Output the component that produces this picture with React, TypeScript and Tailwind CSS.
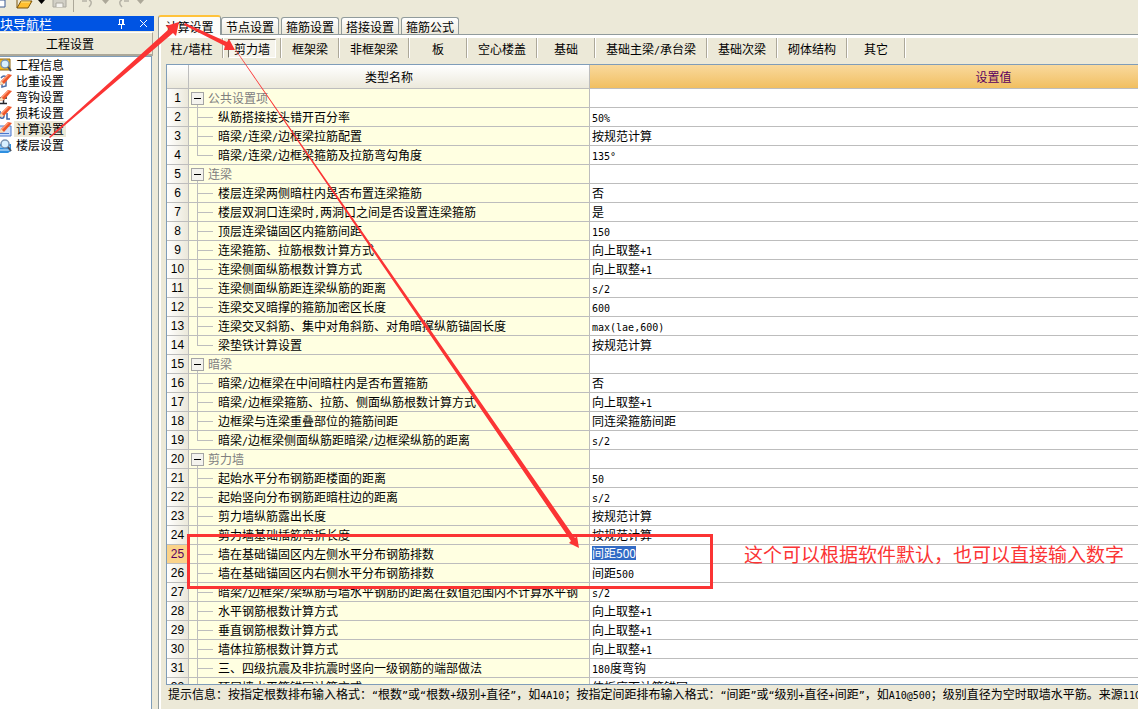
import { useState } from "react"
import type { ReactNode } from "react"

type Row = {
  name: string
  value?: string
  group?: boolean
  last?: boolean
}

const pageTabs = ["计算设置", "节点设置", "箍筋设置", "搭接设置", "箍筋公式"]

const memberTabs = [
  { label: "柱/墙柱", width: "w-[63px]" },
  { label: "剪力墙", width: "w-[58px]" },
  { label: "框架梁", width: "w-[58px]" },
  { label: "非框架梁", width: "w-[70px]" },
  { label: "板", width: "w-[58px]" },
  { label: "空心楼盖", width: "w-[70px]" },
  { label: "基础", width: "w-[58px]" },
  { label: "基础主梁/承台梁", width: "w-[112px]" },
  { label: "基础次梁", width: "w-[70px]" },
  { label: "砌体结构", width: "w-[70px]" },
  { label: "其它", width: "w-[58px]" },
]

const rows: Row[] = [
  { name: "公共设置项", group: true },
  { name: "纵筋搭接接头错开百分率", value: "50%" },
  { name: "暗梁/连梁/边框梁拉筋配置", value: "按规范计算" },
  { name: "暗梁/连梁/边框梁箍筋及拉筋弯勾角度", value: "135°", last: true },
  { name: "连梁", group: true },
  { name: "楼层连梁两侧暗柱内是否布置连梁箍筋", value: "否" },
  { name: "楼层双洞口连梁时,两洞口之间是否设置连梁箍筋", value: "是" },
  { name: "顶层连梁锚固区内箍筋间距", value: "150" },
  { name: "连梁箍筋、拉筋根数计算方式", value: "向上取整+1" },
  { name: "连梁侧面纵筋根数计算方式", value: "向上取整+1" },
  { name: "连梁侧面纵筋距连梁纵筋的距离", value: "s/2" },
  { name: "连梁交叉暗撑的箍筋加密区长度", value: "600" },
  { name: "连梁交叉斜筋、集中对角斜筋、对角暗撑纵筋锚固长度", value: "max(lae,600)" },
  { name: "梁垫铁计算设置", value: "按规范计算", last: true },
  { name: "暗梁", group: true },
  { name: "暗梁/边框梁在中间暗柱内是否布置箍筋", value: "否" },
  { name: "暗梁/边框梁箍筋、拉筋、侧面纵筋根数计算方式", value: "向上取整+1" },
  { name: "边框梁与连梁重叠部位的箍筋间距", value: "同连梁箍筋间距" },
  { name: "暗梁/边框梁侧面纵筋距暗梁/边框梁纵筋的距离", value: "s/2", last: true },
  { name: "剪力墙", group: true },
  { name: "起始水平分布钢筋距楼面的距离", value: "50" },
  { name: "起始竖向分布钢筋距暗柱边的距离", value: "s/2" },
  { name: "剪力墙纵筋露出长度", value: "按规范计算" },
  { name: "剪力墙基础插筋弯折长度", value: "按规范计算" },
  { name: "墙在基础锚固区内左侧水平分布钢筋排数", value: "间距500" },
  { name: "墙在基础锚固区内右侧水平分布钢筋排数", value: "间距500" },
  { name: "暗梁/边框梁/梁纵筋与墙水平钢筋的距离在数值范围内不计算水平钢", value: "s/2" },
  { name: "水平钢筋根数计算方式", value: "向上取整+1" },
  { name: "垂直钢筋根数计算方式", value: "向上取整+1" },
  { name: "墙体拉筋根数计算方式", value: "向上取整+1" },
  { name: "三、四级抗震及非抗震时竖向一级钢筋的端部做法", value: "180度弯钩" },
  { name: "顶层墙水平筋锚固计算方式", value: "伸板底面计算锚固" },
]

const hint =
  "提示信息：按指定根数排布输入格式：“根数”或“根数+级别+直径”，如4A10；按指定间距排布输入格式：“间距”或“级别+直径+间距”，如A10@500；级别直径为空时取墙水平筋。来源11G101"

// Latin runs are half the width of a Chinese character
function Mixed({ text }: { text: string }) {
  return (
    <>
      {text.split(/([\x20-\x7e“”°]+)/).map((part, i) =>
        i % 2 ? (
          <span key={i} className="font-['DejaVu_Sans_Mono',monospace] text-[10px] leading-none">{part}</span>
        ) : (
          part
        )
      )}
    </>
  )
}

const pencil = (
  <>
    <path d="M3 12l2-4 7-7 4 1-8 9z" fill="#ee5528" />
    <path d="M5 8l7-7 1 1-7 7z" fill="#ff9c78" />
    <path d="M3 12l2-4 3 3z" fill="#f8e0b8" />
  </>
)

const lens = (
  <>
    <circle cx="9" cy="7" r="4" fill="#d8f0ff" stroke="#7a93b0" strokeWidth="1.5" />
    <path d="M12 10l3 4" stroke="#46505f" strokeWidth="2" />
  </>
)

const navItems: { label: string; icon: ReactNode }[] = [
  {
    label: "工程信息",
    icon: (
      <>
        <path d="M2 2h12v11H2z" fill="#f5b921" stroke="#94660c" />
        {lens}
      </>
    ),
  },
  {
    label: "比重设置",
    icon: (
      <>
        <path d="M5 5c3-4 7-1 5 2v6l-4 1v-3" fill="none" stroke="#4c6ea6" strokeWidth="1.5" />
        {pencil}
      </>
    ),
  },
  {
    label: "弯钩设置",
    icon: (
      <>
        <path d="M4 14.500h7M7.500 14V8M4 9h7" fill="none" stroke="#26262c" strokeWidth="1.5" />
        {pencil}
      </>
    ),
  },
  {
    label: "损耗设置",
    icon: (
      <>
        <path d="M4 6v5c0 3 4 3 4 0V9M11 8v6h3" fill="none" stroke="#3a62a4" strokeWidth="1.5" />
        {pencil}
      </>
    ),
  },
  {
    label: "计算设置",
    icon: (
      <>
        <path d="M2 5h13v10H2z" fill="#cfe0fb" stroke="#4a78cc" />
        <path d="M4 12.500h9" stroke="#4a78cc" />
        {pencil}
      </>
    ),
  },
  {
    label: "楼层设置",
    icon: (
      <>
        <path d="M2 7h13v7l-3 2H2z" fill="#2f8fe0" />
        <path d="M2 10h12M2 13h12" stroke="#dff0ff" />
        {lens}
      </>
    ),
  },
]

function DropArrow({ color }: { color: string }) {
  return (
    <svg className="w-[7px] h-1" viewBox="0 0 7 4">
      <path d="M0 0h7L3.500 4z" fill={color} />
    </svg>
  )
}

function Toolbar() {
  return (
    <div className="flex h-[15px] shrink-0 items-start">
      <div className="flex h-3 items-start">
        <button aria-label="新建" className="w-[16px]">
          <svg className="h-2 w-[6px]" viewBox="0 0 6 8">
            <path d="M0 0h5v7H0" fill="#fff" stroke="#3a5a94" />
          </svg>
        </button>
        <button aria-label="打开" className="w-[22px]">
          <svg className="h-[9px] w-[17px]" viewBox="0 0 17 9">
            <path d="M1 0v8h11l4-7H5L1 8" fill="#ffbe2e" stroke="#7a550c" />
            <path d="M5 2h9" stroke="#ffe88c" />
          </svg>
        </button>
        <DropArrow color="#000" />
        <button aria-label="保存" className="ml-[7px] w-[16px]">
          <svg className="h-2 w-[15px]" viewBox="0 0 15 8">
            <path d="M1 0v7h13V0" fill="#d2d0c6" stroke="#aaa89e" />
            <path d="M4 7V3h7v4" fill="#f4f3ee" stroke="#aaa89e" />
          </svg>
        </button>
        <span className="ml-[5px] h-3 w-px bg-[#aca899]" />
        <button aria-label="撤销" className="ml-2 w-[20px]">
          <svg className="h-2 w-3" viewBox="0 0 12 8">
            <path d="M0 1h5M7 0c3 1 3 4 0 7" fill="none" stroke="#b5b2a6" strokeWidth="1.5" />
          </svg>
        </button>
        <DropArrow color="#aca899" />
        <button aria-label="恢复" className="ml-2 w-[20px]">
          <svg className="h-2 w-3" viewBox="0 0 12 8">
            <path d="M12 1H7M5 0C2 1 2 4 5 7" fill="none" stroke="#b5b2a6" strokeWidth="1.5" />
          </svg>
        </button>
        <DropArrow color="#aca899" />
      </div>
    </div>
  )
}

function NavPanel() {
  return (
    <aside className="mt-px flex w-[154px] shrink-0 flex-col">
      <div className="flex h-[15px] items-center bg-[#0054e3] pr-[6px] text-white">
        <span className="flex-1 text-[13px] leading-[15px]">块导航栏</span>
        <button aria-label="固定" className="mr-[13px]">
          <svg className="h-[11px] w-[9px]" viewBox="0 0 9 11">
            <path d="M2.500 1v5M6 1v5M2 1.500h5M1 6.500h7M4.500 7v4" fill="none" stroke="#fff" />
            <path d="M5 1h2v5H5z" fill="#fff" />
          </svg>
        </button>
        <button aria-label="关闭">
          <svg className="h-[9px] w-[9px]" viewBox="0 0 9 9">
            <path d="M1 1l7 7M8 1L1 8" stroke="#fff" />
          </svg>
        </button>
      </div>
      <button className="mt-px mr-px h-[24px] border-t border-r border-b-2 border-t-white border-r-[#aca899] border-b-[#aca899] pr-3 leading-[20px]">
        工程设置
      </button>
      <nav className="mr-[2px] flex-1 border-t border-r border-[#7f9db9] bg-white">
        {navItems.map((item) => (
          <a key={item.label} href="#" className="flex h-4 items-center">
            <svg className="mr-[2px] h-4 w-3" viewBox="4 0 12 16">
              {item.icon}
            </svg>
            <span className={item.label === "计算设置" ? "bg-[#ece9d8] px-[2px] leading-4" : "px-[2px] leading-4"}>
              {item.label}
            </span>
          </a>
        ))}
      </nav>
    </aside>
  )
}

function TreeCell({ row }: { row: Row }) {
  if (row.group) {
    return (
      <div className="flex h-[18px] overflow-hidden text-[#808080]">
        <span className="ml-[2px] mr-1 flex w-[13px] flex-col items-center">
          <button
            aria-label={"折叠" + row.name}
            className="mt-[3px] flex h-[13px] w-[13px] shrink-0 items-center justify-center border border-[#a5a5a5] bg-[#f4f3ee]"
          >
            <span className="h-px w-[7px] bg-black" />
          </button>
          <span className="w-px flex-1 bg-[#bdbdbd]" />
        </span>
        {row.name}
      </div>
    )
  }
  return (
    <div className="flex h-[18px] overflow-hidden">
      <span className="ml-2 mr-1 flex w-4 shrink-0 flex-col">
        <span className="h-[10px] border-b border-l border-[#bdbdbd]" />
        {!row.last && <span className="flex-1 border-l border-[#bdbdbd]" />}
      </span>
      <span className="whitespace-nowrap pl-px">
        <Mixed text={row.name} />
      </span>
    </div>
  )
}

function SettingsTable() {
  const [value, setValue] = useState("间距500")

  return (
    <div className="min-h-0 flex-1 overflow-hidden border-y border-l border-[#7f9db9] bg-white">
      <table className="w-full min-w-[1230px] table-fixed border-separate border-spacing-0">
        <colgroup>
          <col className="w-[22px]" />
          <col className="w-[401px]" />
          <col />
        </colgroup>
        <thead>
          <tr className="h-[24px] bg-linear-to-b from-white to-[#ebe8da]">
            <th aria-label="序号" className="border-r border-b border-[#bdbdbd]" />
            <th className="border-r border-b border-[#bdbdbd] font-normal">类型名称</th>
            <th className="border-b border-[#bdbdbd] bg-linear-to-b from-[#f9d99c] to-[#f1bf60] font-normal text-[#5a0060]">
              设置值
            </th>
          </tr>
        </thead>
        <tbody>
          {rows.map((row, i) => (
            <tr key={i} className="leading-[18px]">
              <th
                scope="row"
                className={
                  i === 24
                    ? "border-r border-b border-[#bdbdbd] bg-[#fbd38a] p-0 font-normal text-[#5a0060]"
                    : "border-r border-b border-[#bdbdbd] bg-linear-to-r from-white to-[#ebe8da] p-0 font-normal"
                }
              >
                <div className="h-[18px] overflow-hidden font-['Liberation_Sans',sans-serif]">{i + 1}</div>
              </th>
              <td className="border-r border-b border-[#bdbdbd] bg-[#ffffe1] p-0">
                <TreeCell row={row} />
              </td>
              <td className="border-b border-[#bdbdbd] p-0 pl-[2px]">
                {i === 24 ? (
                  <div className="h-[18px] pt-px">
                    <input
                      aria-label={row.name}
                      value={value}
                      onChange={(e) => setValue(e.target.value)}
                      className="block h-[14px] w-[44px] bg-[#316ac5] leading-[14px] text-white outline-none"
                    />
                  </div>
                ) : (
                  <div className="h-[18px] overflow-hidden">
                    <Mixed text={row.value ?? ""} />
                  </div>
                )}
              </td>
            </tr>
          ))}
        </tbody>
      </table>
    </div>
  )
}

// Red pen marks drawn over the window
function Annotations() {
  return (
    <div className="pointer-events-none absolute inset-0 overflow-hidden">
      <svg className="h-full w-full" fill="#fb3434">
        <path d="M49 137L169 29L166 26L179 22L176 36L173 33L50 138z" />
        <path d="M185 23L227 42L229 39L235 50L224 50L225 46L184 25z" />
        <path d="M236 50L575 538L577 536L579 548L569 543L571 541L236 51z" />
      </svg>
      <div className="absolute top-[534px] left-[187px] h-[55px] w-[526px] border-[3px] border-[#fb3434]" />
      <p className="absolute top-[542px] left-[744px] whitespace-nowrap text-[19px] leading-[24px] text-[#fb3434]">
        这个可以根据软件默认，也可以直接输入数字
      </p>
    </div>
  )
}

export default function App() {
  const [tab, setTab] = useState("计算设置")
  const [member, setMember] = useState("剪力墙")

  return (
    <div className="relative flex h-screen flex-col overflow-hidden bg-[#ece9d8] font-['Noto_Sans_CJK_SC','Liberation_Sans',sans-serif] text-xs text-black">
      <Toolbar />
      <div className="flex min-h-0 flex-1">
        <NavPanel />

        <main className="ml-1 flex min-w-0 flex-1 flex-col">
          {/* Page tabs */}
          <div role="tablist" className="flex h-[20px] shrink-0 items-end border-b border-[#919b9c]">
            {pageTabs.map((label) => (
              <button
                key={label}
                role="tab"
                aria-selected={label === tab}
                onClick={() => setTab(label)}
                className={
                  label === tab
                    ? "-mb-px h-[20px] w-[63px] rounded-t-[3px] border-x border-t-2 border-x-[#919b9c] border-t-[#ffc33c] bg-[#fcfcfa] leading-[17px]"
                    : "mr-[2px] h-[17px] w-[58px] rounded-t-[3px] border-x border-t border-[#919b9c] bg-linear-to-b from-white to-[#ece9dc] leading-[17px]"
                }
              >
                {label}
              </button>
            ))}
          </div>

          <div className="flex min-h-0 flex-1 flex-col border-l border-[#919b9c]">
            <div className="flex min-h-0 flex-1 flex-col border-t-[3px] border-l-2 border-white">
              {/* Member tabs */}
              <div className="flex h-[26px] shrink-0 items-start">
                {memberTabs.map(({ label, width }) => (
                  <div key={label} className={`${width} flex h-[20px] shrink-0 border-r border-white`}>
                    <button
                      onClick={() => setMember(label)}
                      className={
                        label === member
                          ? "mx-1 mt-px h-[19px] flex-1 border border-t-[#716f64] border-r-white border-b-white border-l-[#716f64] bg-[#f6f4ec] leading-[17px]"
                          : "flex-1 leading-[19px]"
                      }
                    >
                      <Mixed text={label} />
                    </button>
                    <span className="w-px bg-[#aca899]" />
                  </div>
                ))}
              </div>

              <div className="flex min-h-0 flex-1 flex-col pl-[5px]">
                <SettingsTable />
                <p className="h-[24px] shrink-0 overflow-hidden pl-[2px] leading-[17px] whitespace-nowrap">
                  <Mixed text={hint} />
                </p>
              </div>
            </div>
          </div>
        </main>
      </div>
      <Annotations />
    </div>
  )
}
